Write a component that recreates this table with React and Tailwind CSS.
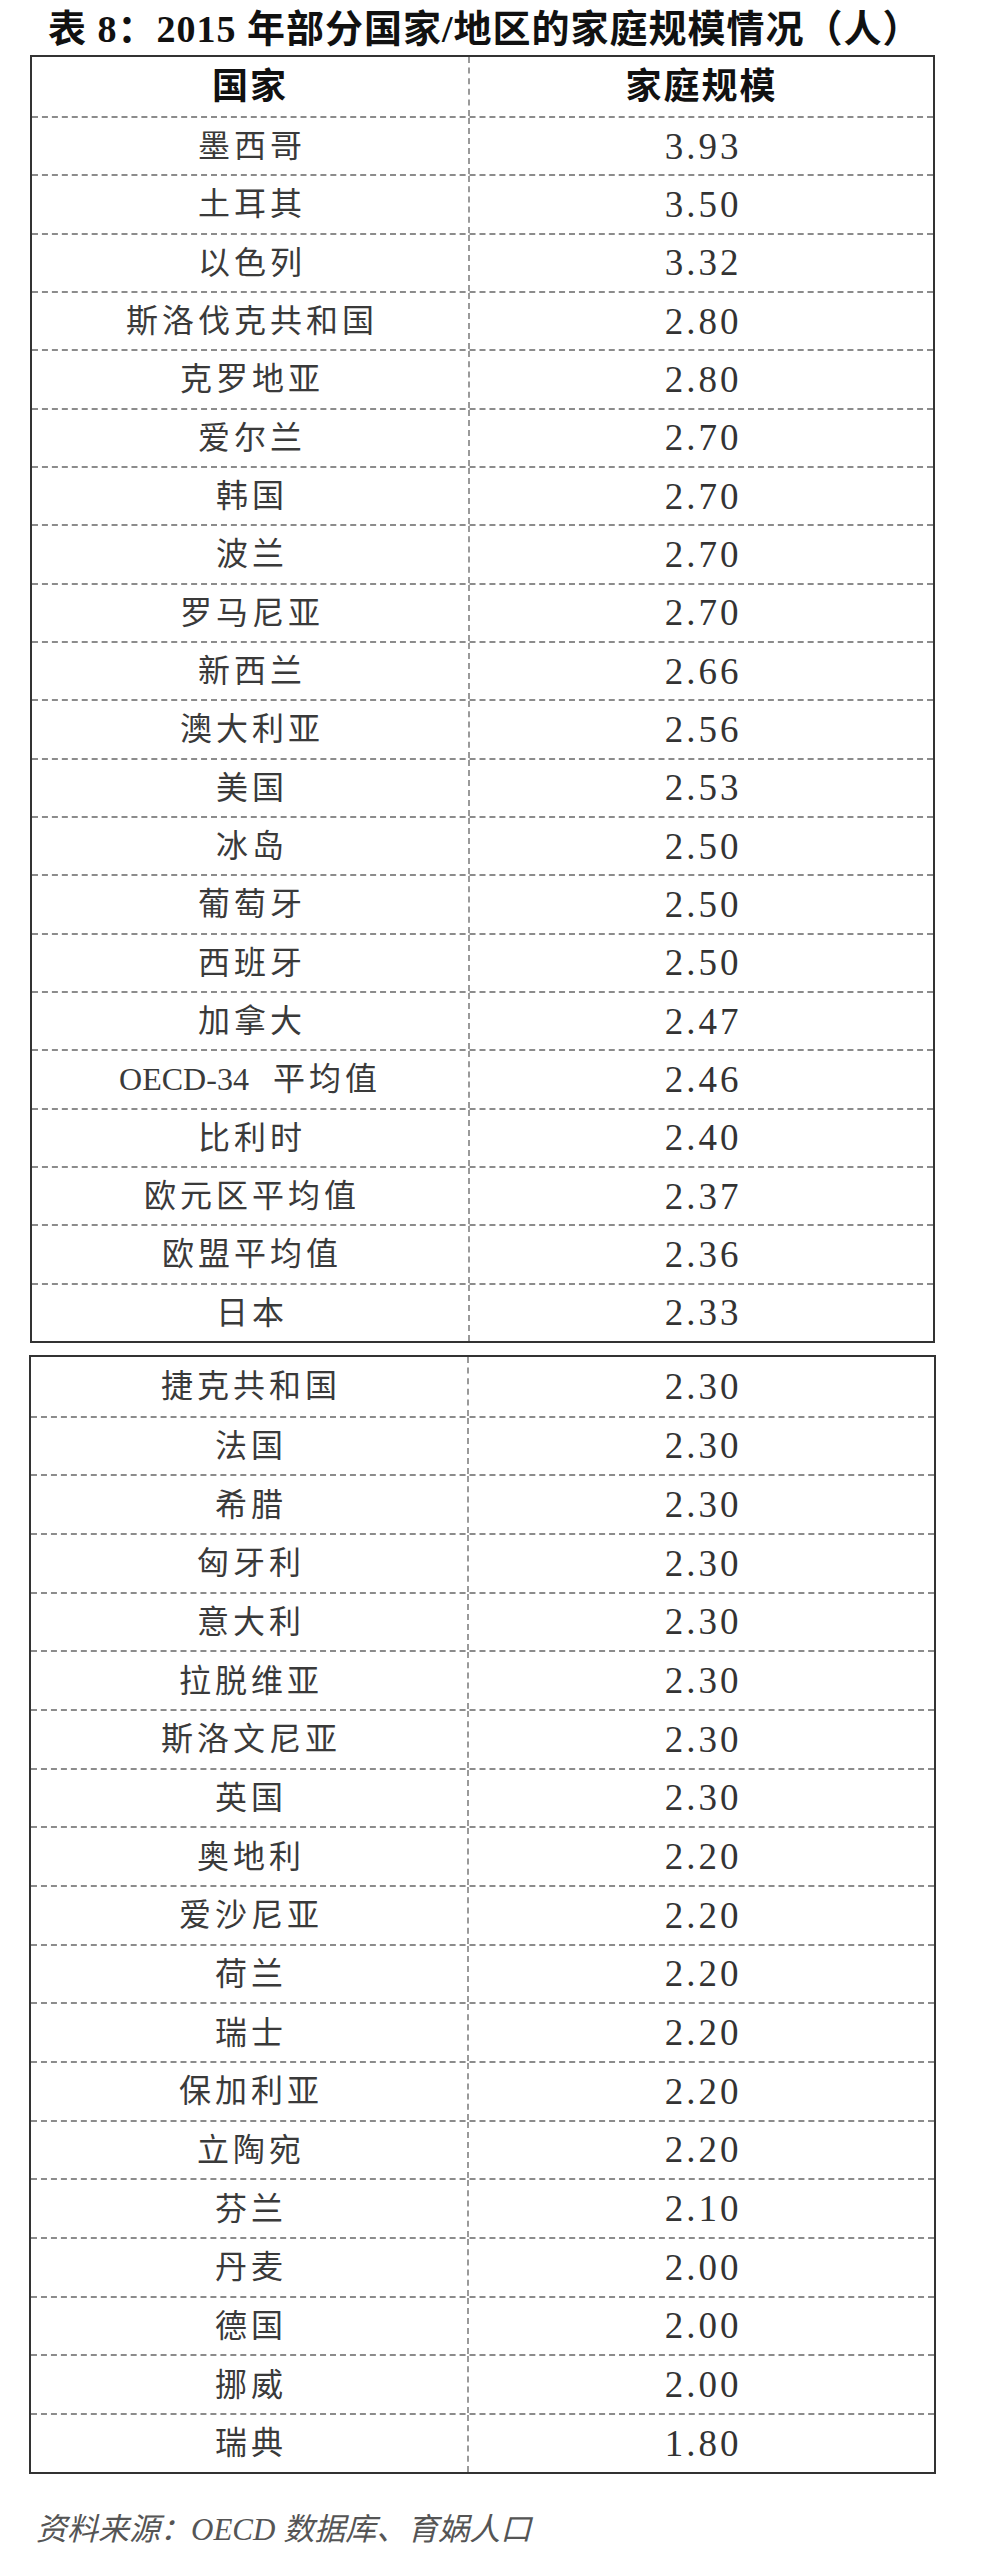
const TOP = [
  ['墨西哥', '3.93'],
  ['土耳其', '3.50'],
  ['以色列', '3.32'],
  ['斯洛伐克共和国', '2.80'],
  ['克罗地亚', '2.80'],
  ['爱尔兰', '2.70'],
  ['韩国', '2.70'],
  ['波兰', '2.70'],
  ['罗马尼亚', '2.70'],
  ['新西兰', '2.66'],
  ['澳大利亚', '2.56'],
  ['美国', '2.53'],
  ['冰岛', '2.50'],
  ['葡萄牙', '2.50'],
  ['西班牙', '2.50'],
  ['加拿大', '2.47'],
  ['OECD', '2.46'],
  ['比利时', '2.40'],
  ['欧元区平均值', '2.37'],
  ['欧盟平均值', '2.36'],
  ['日本', '2.33'],
]

const BOTTOM = [
  ['捷克共和国', '2.30'],
  ['法国', '2.30'],
  ['希腊', '2.30'],
  ['匈牙利', '2.30'],
  ['意大利', '2.30'],
  ['拉脱维亚', '2.30'],
  ['斯洛文尼亚', '2.30'],
  ['英国', '2.30'],
  ['奥地利', '2.20'],
  ['爱沙尼亚', '2.20'],
  ['荷兰', '2.20'],
  ['瑞士', '2.20'],
  ['保加利亚', '2.20'],
  ['立陶宛', '2.20'],
  ['芬兰', '2.10'],
  ['丹麦', '2.00'],
  ['德国', '2.00'],
  ['挪威', '2.00'],
  ['瑞典', '1.80'],
]

const serif = 'font-["Liberation_Serif","Noto_Sans_CJK_SC",serif]'

function Name({ text }) {
  if (text === 'OECD') {
    return (
      <span className="whitespace-pre">
        <span className="tracking-normal">OECD-34</span>
        <span className="tracking-[4px]">{'  平均值'}</span>
      </span>
    )
  }
  return <span className="tracking-[4px] pl-[4px]">{text}</span>
}

function Row({ name, value, h, first }) {
  return (
    <div
      className={`flex ${h} ${first ? '' : 'border-t-2 border-dashed border-t-[#8c8c8c]'}`}
    >
      <div className="w-[438px] shrink-0 flex items-center justify-center border-r-2 border-dashed border-r-[#9a9a9a] text-[32px] text-[#3a3a3a]">
        <Name text={name} />
      </div>
      <div className="flex-1 flex items-center justify-center text-[37px] tracking-[3px] text-[#333] pl-[3px]">
        {value}
      </div>
    </div>
  )
}

export default function App() {
  return (
    <div className={`w-[990px] h-[2560px] bg-white ${serif} leading-none`}>
      <div className="h-[55px] pt-[6px] pl-[48px] text-[38px] leading-[46px] font-bold tracking-[1px] text-[#111] whitespace-pre">
        表 8：2015 年部分国家/地区的家庭规模情况（人）
      </div>

      <div className="ml-[30px] w-[905px] border-2 border-[#333]">
        <div className="flex h-[59px]">
          <div className="w-[438px] shrink-0 flex items-center justify-center border-r-2 border-dashed border-r-[#9a9a9a] text-[36px] font-bold tracking-[2px] text-[#111]">
            国家
          </div>
          <div className="flex-1 flex items-center justify-center text-[36px] font-bold tracking-[2px] text-[#111]">
            家庭规模
          </div>
        </div>
        {TOP.map(([n, v]) => (
          <Row key={n} name={n} value={v} h="h-[58.33px]" />
        ))}
      </div>

      <div className="mt-[12px] ml-[29px] w-[907px] border-2 border-[#333]">
        {BOTTOM.map(([n, v], i) => (
          <Row key={n} name={n} value={v} h="h-[58.68px]" first={i === 0} />
        ))}
      </div>

      <div className="mt-[38px] pl-[36px] text-[31px] italic text-[#555] leading-[36px]">
        资料来源：OECD 数据库、育娲人口
      </div>
    </div>
  )
}
